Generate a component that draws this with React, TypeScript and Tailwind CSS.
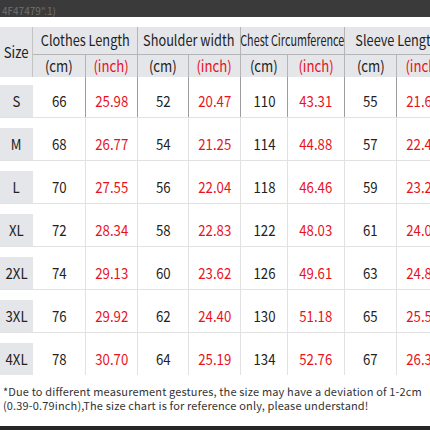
import React from "react";

const rows = [
  ["S", "66", "25.98", "52", "20.47", "110", "43.31", "55", "21.65"],
  ["M", "68", "26.77", "54", "21.25", "114", "44.88", "57", "22.44"],
  ["L", "70", "27.55", "56", "22.04", "118", "46.46", "59", "23.22"],
  ["XL", "72", "28.34", "58", "22.83", "122", "48.03", "61", "24.01"],
  ["2XL", "74", "29.13", "60", "23.62", "126", "49.61", "63", "24.80"],
  ["3XL", "76", "29.92", "62", "24.40", "130", "51.18", "65", "25.59"],
  ["4XL", "78", "30.70", "64", "25.19", "134", "52.76", "67", "26.38"],
];

const groups = ["Clothes Length", "Shoulder width", "Chest Circumference", "Sleeve Length"];

const App = () => {
  return (
    <div
      className="w-[430px] h-[430px] overflow-hidden bg-white flex flex-col text-[#222]"
      style={{ fontFamily: '"Noto Sans CJK SC", "Noto Sans", sans-serif' }}
    >
      <div className="h-[17px] bg-[#3a3a3a] flex items-end px-[2px] text-[10px] leading-[13px] text-[#707070] shrink-0">
        4F47479".1)
      </div>
      <div className="h-[10px] shrink-0" />

      <div className="w-[449px] grid grid-cols-[33px_53px_52px_51px_52px_47px_57px_52px_53px] shrink-0">
        {/* header */}
        <div className="row-span-2 bg-[#e5e6ea] border-r border-[#c4c4c4] flex items-center justify-center text-[15px]">
          <span className="scale-x-[0.88]">Size</span>
        </div>
        {groups.map((g) => (
          <div
            key={g}
            className="col-span-2 h-[28px] bg-[#e5e6ea] border-r border-b border-[#b5b5b5] flex items-center justify-center whitespace-nowrap text-[15px]"
          >
            <span className={g === "Chest Circumference" ? "scale-x-[0.72]" : "scale-x-[0.85]"}>{g}</span>
          </div>
        ))}
        {groups.map((g) => (
          <React.Fragment key={g + "u"}>
            <div className="h-[22px] bg-[#e5e6ea] border-r border-[#b5b5b5] flex items-center justify-center text-[15px]">
              <span className="scale-x-[0.88]">(cm)</span>
            </div>
            <div className="h-[22px] bg-[#e5e6ea] border-r border-[#b5b5b5] flex items-center justify-center text-[15px] text-[#e8121c]">
              <span className="scale-x-[0.88]">(inch)</span>
            </div>
          </React.Fragment>
        ))}

        {/* body */}
        {rows.map((r, i) => (
          <React.Fragment key={r[0]}>
            {r.map((v, j) => (
              <div
                key={j}
                className={`flex flex-col justify-end ${i === 0 ? "h-[40px]" : "h-[43px] border-t border-[#e2e2e2]"} ${
                  j > 0 ? "border-r border-[#9c9c9c]" : ""
                }`}
              >
                <div
                  className={`h-[32px] flex items-center justify-center text-[15px] ${
                    j === 0 ? "bg-[#e5e6ea]" : ""
                  } ${j > 0 && j % 2 === 0 ? "text-[#e8121c]" : ""}`}
                >
                  <span className="scale-x-[0.88]">{v}</span>
                </div>
              </div>
            ))}
          </React.Fragment>
        ))}
      </div>

      <div className="px-[3px] pt-[9px] text-[11px] leading-[14px] tracking-[0.15px] text-[#333] whitespace-nowrap">
        <div>*Due to different measurement gestures, the size may have a deviation of 1-2cm</div>
        <div>(0.39-0.79inch),The size chart is for reference only, please understand!</div>
      </div>
      <div className="flex-1" />
      <div className="h-[4px] bg-[#262626] shrink-0" />
    </div>
  );
};

export default App;
